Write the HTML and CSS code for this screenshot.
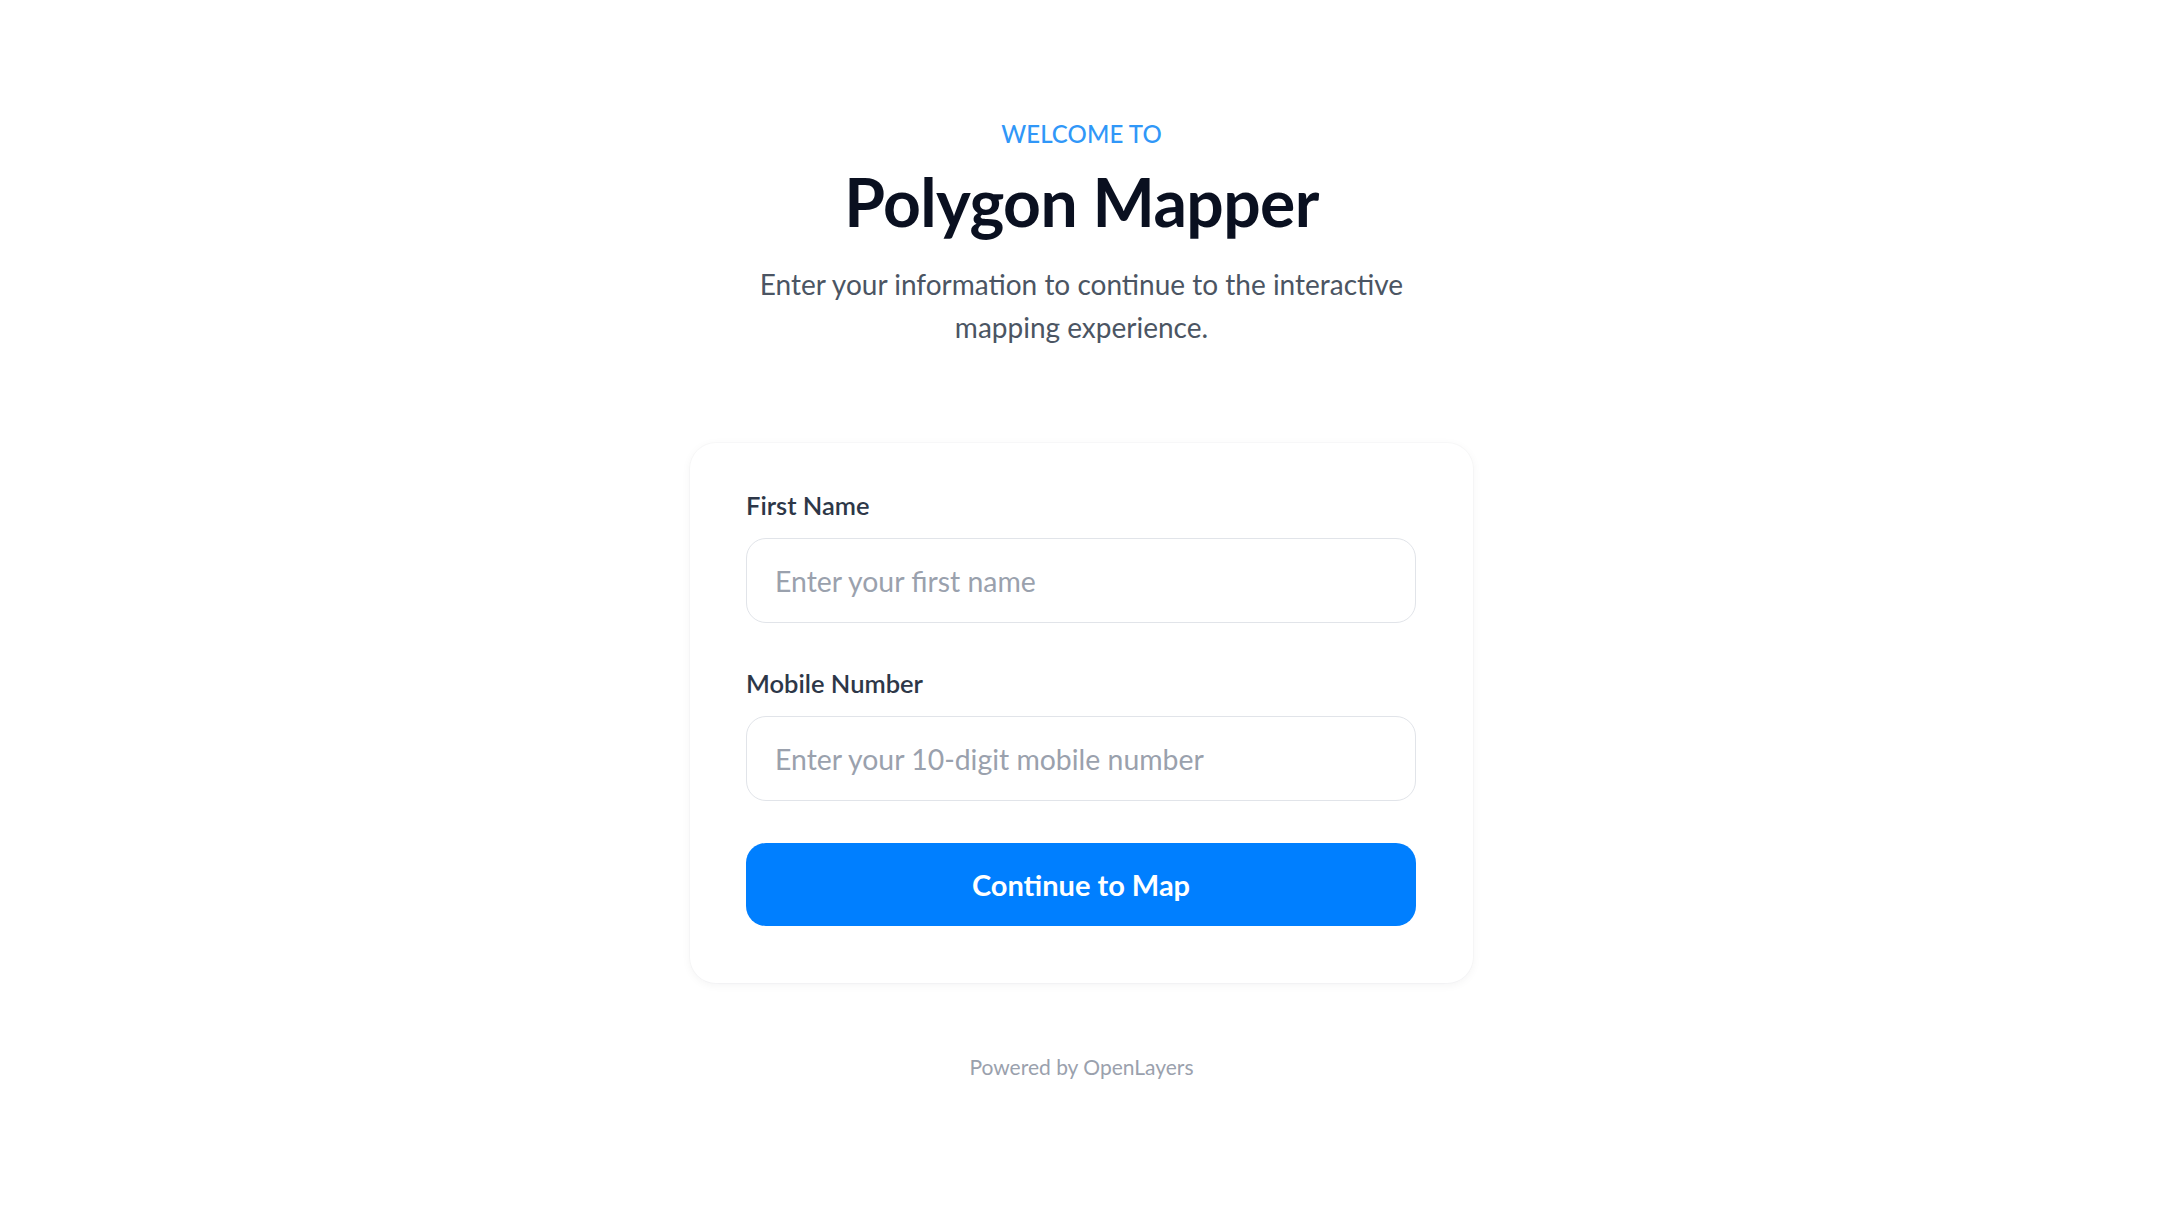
FILE: index.html
```html
<!DOCTYPE html>
<html lang="en">
<head>
<meta charset="utf-8">
<title>Polygon Mapper</title>
<link rel="stylesheet" href="styles.css">
</head>
<body>
<main class="page">
  <header class="intro">
    <p class="eyebrow">WELCOME TO</p>
    <h1 class="title">Polygon Mapper</h1>
    <p class="lead">Enter your information to continue to the interactive<br>mapping experience.</p>
  </header>
  <form class="card">
    <div class="field">
      <label class="label" for="fname">First Name</label>
      <input class="input" id="fname" type="text" placeholder="Enter your first name">
    </div>
    <div class="field field-last">
      <label class="label" for="mobile">Mobile Number</label>
      <input class="input" id="mobile" type="tel" placeholder="Enter your 10-digit mobile number">
    </div>
    <button class="btn" type="button">Continue to Map</button>
  </form>
  <p class="footer">Powered by OpenLayers</p>
</main>
</body>
</html>
```
FILE: styles.css
```css
* { box-sizing: border-box; }
html, body { margin: 0; padding: 0; background: #ffffff; }
body {
  font-family: "Segoe UI", Lato, "Noto Sans", sans-serif;
  color: #111827;
}
.page {
  display: flex;
  flex-direction: column;
  align-items: center;
  padding-top: 118px;
  padding-left: 4px;
}
.intro {
  display: flex;
  flex-direction: column;
  align-items: center;
  text-align: center;
}
.eyebrow {
  margin: 0;
  font-size: 24px;
  line-height: 32px;
  font-weight: 500;
  color: #3097f8;
  letter-spacing: 0.1px;
}
.title {
  margin: 11px 0 0;
  font-size: 66px;
  line-height: 82px;
  font-weight: 700;
  color: #0a1020;
  letter-spacing: -0.6px;
}
.lead {
  margin: 20px 0 0;
  font-size: 28px;
  line-height: 43px;
  color: #4b5563;
}
.card {
  margin-top: 94px;
  width: 783px;
  padding: 46px 57px 57px 56px;
  background: #fff;
  border-radius: 26px;
  box-shadow: 0 2px 10px rgba(15, 23, 42, 0.05), 0 0 0 1px rgba(15, 23, 42, 0.02);
  display: flex;
  flex-direction: column;
}
.field {
  display: flex;
  flex-direction: column;
  margin-bottom: 44px;
}
.field-last { margin-bottom: 42px; }
.label {
  font-size: 25.5px;
  line-height: 33px;
  font-weight: 600;
  color: #2d3748;
  margin-bottom: 16px;
}
.input {
  height: 85px;
  border: 1.5px solid #e1e4e9;
  border-radius: 20px;
  padding: 0 28px;
  font-family: inherit;
  font-size: 28.4px;
  color: #111827;
  background: #fff;
  outline: none;
}
.input::placeholder { color: #9aa1ad; }
.btn {
  height: 83px;
  border: none;
  border-radius: 20px;
  background: #007fff;
  color: #fff;
  font-family: inherit;
  font-size: 29px;
  font-weight: 700;
  cursor: pointer;
}
.footer {
  margin: 70px 0 0;
  font-size: 21px;
  line-height: 28px;
  color: #9aa1ad;
}
```
